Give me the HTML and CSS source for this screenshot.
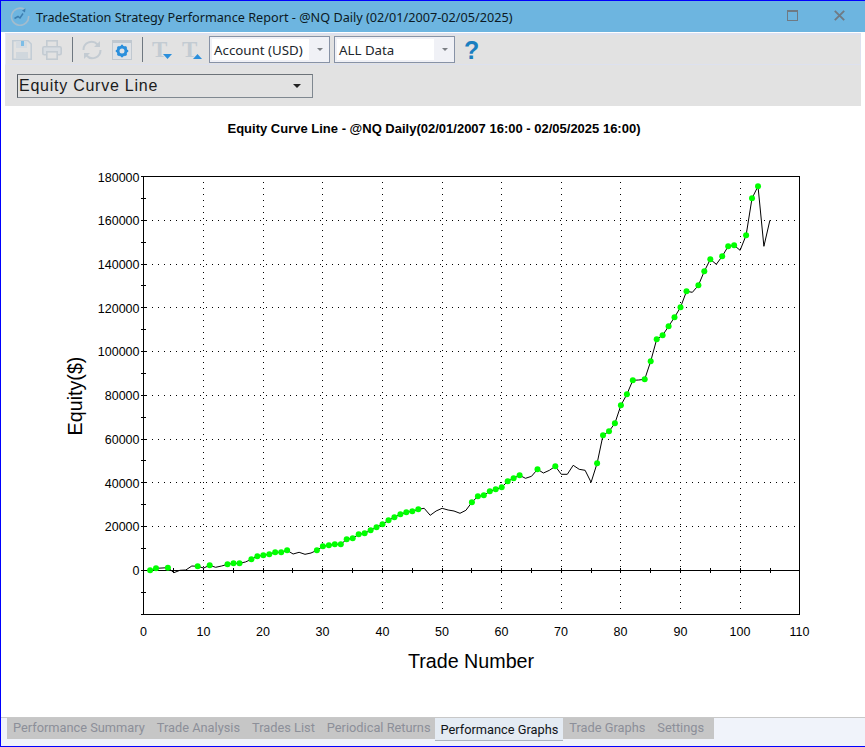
FILE: index.html
```html
<!DOCTYPE html>
<html lang="en">
<head>
<meta charset="utf-8">
<title>TradeStation Strategy Performance Report</title>
<link rel="stylesheet" href="styles.css">
</head>
<body>
<div class="window">
  <header class="titlebar">
    <svg class="app-icon" width="20" height="20" viewBox="0 0 20 20">
      <path d="M14.5 3.4A8.6 8.6 0 1 0 18.6 10" fill="none" stroke="#a3bccd" stroke-width="1.6"/>
      <path d="M4.500 12.500L8 10.500L10 12L13 7.500" fill="none" stroke="#3d7fb0" stroke-width="1.500"/>
      <path d="M12 4.500L15.500 2.500L15 6.500Z" fill="#3d7fb0"/>
    </svg>
    <span class="title-text">TradeStation Strategy Performance Report - @NQ Daily (02/01/2007-02/05/2025)</span>
    <svg class="win-max" width="11" height="11" viewBox="0 0 11 11">
      <rect x="0.500" y="0.500" width="10" height="10" fill="none" stroke="#6f7a84"/>
      <rect x="0" y="0" width="11" height="2" fill="#6f7a84"/>
    </svg>
    <svg class="win-close" width="11" height="11" viewBox="0 0 11 11">
      <path d="M0.800 0.800L10.200 10.200M10.200 0.800L0.800 10.200" stroke="#6f7a84" stroke-width="1.900"/>
    </svg>
  </header>

  <div class="toolbar">
    <svg class="tool" width="20" height="20" viewBox="0 0 20 20">
      <path d="M0.800 0.800H16L19.200 4V19.200H0.800Z" fill="none" stroke="#c3cdd6" stroke-width="1.600"/>
      <rect x="4" y="1" width="11" height="7" fill="#d5dbe1"/>
      <rect x="9" y="1" width="3" height="5" fill="#7dbde6"/>
      <rect x="4" y="12" width="12" height="7" fill="#d0d7dd"/>
    </svg>
    <svg class="tool" width="20" height="20" viewBox="0 0 20 20">
      <rect x="4.800" y="0.800" width="10.400" height="6" fill="none" stroke="#c3cbd2" stroke-width="1.600"/>
      <rect x="0.800" y="6.800" width="18.400" height="8" rx="1.500" fill="#d8dde2" stroke="#c3cbd2" stroke-width="1.600"/>
      <rect x="4.800" y="11.800" width="10.400" height="7.400" fill="#e2e2e2" stroke="#c3cbd2" stroke-width="1.600"/>
    </svg>
    <span class="sep"></span>
    <svg class="tool" width="20" height="20" viewBox="0 0 20 20">
      <path d="M1.500 10A8 8 0 0 1 15.500 4.500" fill="none" stroke="#c3cbd2" stroke-width="2"/>
      <path d="M18.500 10A8 8 0 0 1 4.500 15.500" fill="none" stroke="#c3cbd2" stroke-width="2"/>
      <path d="M18 1V7H12Z" fill="#c3cbd2"/>
      <path d="M2 19V13H8Z" fill="#c3cbd2"/>
    </svg>
    <svg class="tool" width="20" height="20" viewBox="0 0 20 20">
      <rect x="0.500" y="0.500" width="19" height="19" fill="#dfe2e6" stroke="#c0c8d0"/>
      <rect x="0" y="0" width="20" height="3" fill="#c0c8d0"/>
      <circle cx="10" cy="11" r="4" fill="none" stroke="#2a8fdc" stroke-width="3"/>
      <path d="M10 4.800V7M10 15V17.200M3.800 11H6M14 11H16.200M5.600 6.600L7.200 8.200M12.800 13.800L14.400 15.400M14.400 6.600L12.800 8.200M7.200 13.800L5.600 15.400" stroke="#2a8fdc" stroke-width="2"/>
    </svg>
    <span class="sep"></span>
    <div class="tool tool-t">
      <span class="t-glyph">T</span>
      <svg class="t-arrow" width="9" height="5" viewBox="0 0 9 5"><path d="M0 0H9L4.500 5Z" fill="#2a8fdc"/></svg>
    </div>
    <div class="tool tool-t">
      <span class="t-glyph">T</span>
      <svg class="t-arrow" width="9" height="5" viewBox="0 0 9 5"><path d="M0 5H9L4.500 0Z" fill="#2a8fdc"/></svg>
    </div>
    <div class="combo combo-first"><span class="combo-field">Account (USD)</span><span class="combo-arrow"></span></div>
    <div class="combo"><span class="combo-field">ALL Data</span><span class="combo-arrow"></span></div>
    <span class="help">?</span>
  </div>

  <div class="selector-bar">
    <div class="selector"><span class="selector-text">Equity Curve Line</span><span class="selector-arrow"></span></div>
  </div>

  <main class="chart">
    <svg class="plot" width="864" height="611" viewBox="1 106 864 611">
      <text class="chart-title" x="434" y="133" text-anchor="middle">Equity Curve Line - @NQ Daily(02/01/2007 16:00 - 02/05/2025 16:00)</text>

      <g class="grid">
        <path d="M146 220H799M146 264H799M146 307.500H799M146 351H799M146 395H799M146 439H799M146 482.500H799M146 526H799"/>
        <path d="M203.500 182V614M263.500 182V614M322.500 182V614M382.500 182V614M442.500 182V614M501.500 182V614M561.500 182V614M620.500 182V614M680.500 182V614M740.500 182V614"/>
      </g>

      <g class="axes">
        <rect x="143.500" y="176.500" width="656" height="437.500"/>
        <path d="M141 176.500H144M141 614.500H144M141 570.500H800"/>
        <path d="M141 198.500H146M141 220.500H146M141 242.500H146M141 264.500H146M141 285.500H146M141 307.500H146M141 329.500H146M141 351.500H146M141 373.500H146M141 395.500H146M141 417.500H146M141 439.500H146M141 460.500H146M141 482.500H146M141 504.500H146M141 526.500H146M141 548.500H146M141 592.500H146"/>
        <path d="M173.500 568V573M203.500 568V573M233.500 568V573M263.500 568V573M292.500 568V573M322.500 568V573M352.500 568V573M382.500 568V573M412.500 568V573M442.500 568V573M471.500 568V573M501.500 568V573M531.500 568V573M561.500 568V573M591.500 568V573M620.500 568V573M650.500 568V573M680.500 568V573M710.500 568V573M740.500 568V573M770.500 568V573"/>
      </g>

      <g class="ylabels" text-anchor="end">
        <text x="139.500" y="181.500">180000</text>
        <text x="139.500" y="225">160000</text>
        <text x="139.500" y="269">140000</text>
        <text x="139.500" y="312.500">120000</text>
        <text x="139.500" y="356">100000</text>
        <text x="139.500" y="400">80000</text>
        <text x="139.500" y="444">60000</text>
        <text x="139.500" y="487.500">40000</text>
        <text x="139.500" y="531">20000</text>
        <text x="139.500" y="575">0</text>
      </g>
      <g class="xlabels" text-anchor="middle">
        <text x="143.500" y="636">0</text>
        <text x="203.500" y="636">10</text>
        <text x="263" y="636">20</text>
        <text x="322.500" y="636">30</text>
        <text x="382.500" y="636">40</text>
        <text x="442" y="636">50</text>
        <text x="501.500" y="636">60</text>
        <text x="561" y="636">70</text>
        <text x="620.500" y="636">80</text>
        <text x="680.500" y="636">90</text>
        <text x="740" y="636">100</text>
        <text x="799.500" y="636">110</text>
      </g>
      <text class="axis-title" x="471" y="668" text-anchor="middle">Trade Number</text>
      <text class="axis-title" transform="translate(82 396) rotate(-90)" text-anchor="middle">Equity($)</text>

      <g transform="translate(0.600 0)">
        <polyline class="equity" points="149.500,570.300 155.400,568.300 161.400,568 167.300,567.700 173.300,572.700 179.300,570.300 185.200,570 191.200,566 197.100,566.300 203.100,568 209.100,565.300 215,567.300 221,566 226.900,564.300 232.900,563.300 238.900,563.300 244.800,562 250.800,559.300 256.700,556.300 262.700,555.300 268.700,554.300 274.600,552.300 280.600,552.300 286.500,550.300 292.500,554 298.500,552.300 304.400,554.300 310.400,553 316.300,550.300 322.300,546.300 328.300,545.300 334.200,544.300 340.200,544.300 346.100,539.300 352.100,538.300 358.100,534.300 364,533.300 370,530.300 375.900,527.300 381.900,524.300 387.900,520.300 393.800,517.300 399.800,514.300 405.700,512.300 411.700,511.300 417.700,509.300 423.600,508.300 429.600,515.300 435.500,511 441.500,508.300 447.500,510 453.400,511 459.400,513.300 465.300,510.300 471.300,502.300 477.300,496.300 483.200,495.300 489.200,491.300 495.100,489.300 501.100,487.300 507.100,481.300 513,478.300 519,475.300 524.900,478.300 530.900,476.300 536.900,469.300 542.800,473 548.800,470.300 554.700,466.300 560.700,474.300 566.700,474.300 572.600,465.300 578.600,469.300 584.500,470.300 590.500,482.300 596.500,463.300 602.400,435.300 608.400,431.300 614.300,423.300 620.300,405.300 626.300,394.300 632.200,380.300 638.200,380 644.100,379.300 650.100,361.300 656.100,339.300 662,335.300 668,326.300 673.900,317.300 679.900,307.300 685.900,291.300 691.800,292.300 697.800,285.300 703.700,271.300 709.700,259.300 715.700,264.300 721.600,256.300 727.600,246.300 733.500,245.300 739.500,250.300 745.500,235.300 751.400,198.300 757.400,186.300 763.300,246.300 769.300,220.300"/>
        <g class="markers">
          <circle cx="149.500" cy="570.300" r="3"/><circle cx="155.400" cy="568.300" r="3"/><circle cx="167.300" cy="567.700" r="3"/><circle cx="197.100" cy="566.300" r="3"/><circle cx="209.100" cy="565.300" r="3"/><circle cx="226.900" cy="564.300" r="3"/><circle cx="232.900" cy="563.300" r="3"/><circle cx="238.900" cy="563.300" r="3"/><circle cx="250.800" cy="559.300" r="3"/><circle cx="256.700" cy="556.300" r="3"/><circle cx="262.700" cy="555.300" r="3"/><circle cx="268.700" cy="554.300" r="3"/><circle cx="274.600" cy="552.300" r="3"/><circle cx="280.600" cy="552.300" r="3"/><circle cx="286.500" cy="550.300" r="3"/>
          <circle cx="316.300" cy="550.300" r="3"/><circle cx="322.300" cy="546.300" r="3"/><circle cx="328.300" cy="545.300" r="3"/><circle cx="334.200" cy="544.300" r="3"/><circle cx="340.200" cy="544.300" r="3"/><circle cx="346.100" cy="539.300" r="3"/><circle cx="352.100" cy="538.300" r="3"/><circle cx="358.100" cy="534.300" r="3"/><circle cx="364" cy="533.300" r="3"/><circle cx="370" cy="530.300" r="3"/><circle cx="375.900" cy="527.300" r="3"/><circle cx="381.900" cy="524.300" r="3"/><circle cx="387.900" cy="520.300" r="3"/><circle cx="393.800" cy="517.300" r="3"/><circle cx="399.800" cy="514.300" r="3"/><circle cx="405.700" cy="512.300" r="3"/><circle cx="411.700" cy="511.300" r="3"/><circle cx="417.700" cy="509.300" r="3"/>
          <circle cx="471.300" cy="502.300" r="3"/><circle cx="477.300" cy="496.300" r="3"/><circle cx="483.200" cy="495.300" r="3"/><circle cx="489.200" cy="491.300" r="3"/><circle cx="495.100" cy="489.300" r="3"/><circle cx="501.100" cy="487.300" r="3"/><circle cx="507.100" cy="481.300" r="3"/><circle cx="513" cy="478.300" r="3"/><circle cx="519" cy="475.300" r="3"/><circle cx="536.900" cy="469.300" r="3"/><circle cx="554.700" cy="466.300" r="3"/><circle cx="596.500" cy="463.300" r="3"/>
          <circle cx="602.400" cy="435.300" r="3"/><circle cx="608.400" cy="431.300" r="3"/><circle cx="614.300" cy="423.300" r="3"/><circle cx="620.300" cy="405.300" r="3"/><circle cx="626.300" cy="394.300" r="3"/><circle cx="632.200" cy="380.300" r="3"/><circle cx="644.100" cy="379.300" r="3"/><circle cx="650.100" cy="361.300" r="3"/><circle cx="656.100" cy="339.300" r="3"/><circle cx="662" cy="335.300" r="3"/><circle cx="668" cy="326.300" r="3"/><circle cx="673.900" cy="317.300" r="3"/><circle cx="679.900" cy="307.300" r="3"/><circle cx="685.900" cy="291.300" r="3"/><circle cx="697.800" cy="285.300" r="3"/><circle cx="703.700" cy="271.300" r="3"/><circle cx="709.700" cy="259.300" r="3"/><circle cx="721.600" cy="256.300" r="3"/><circle cx="727.600" cy="246.300" r="3"/><circle cx="733.500" cy="245.300" r="3"/><circle cx="745.500" cy="235.300" r="3"/><circle cx="751.400" cy="198.300" r="3"/><circle cx="757.400" cy="186.300" r="3"/>
        </g>
      </g>
    </svg>
  </main>

  <nav class="tabs">
    <div class="tab-strip">
      <span class="tab">Performance Summary</span>
      <span class="tab">Trade Analysis</span>
      <span class="tab">Trades List</span>
      <span class="tab">Periodical Returns</span>
      <span class="tab tab-active">Performance Graphs</span>
      <span class="tab">Trade Graphs</span>
      <span class="tab">Settings</span>
    </div>
  </nav>
</div>
</body>
</html>
```

FILE: styles.css
```css
* { box-sizing: border-box; }
html, body { margin: 0; padding: 0; }
body { background: #ffffff; overflow: hidden; }

.window {
  width: 865px;
  height: 747px;
  display: flex;
  flex-direction: column;
  border: 1px solid #0000ff;
  border-right: 0;
  background: #ffffff;
  font-family: "Noto Sans", "Open Sans", sans-serif;
}

.titlebar {
  height: 31px;
  flex: none;
  background: #6db5e0;
  display: flex;
  align-items: center;
  padding-left: 9px;
}
.app-icon { flex: none; margin-top: -2px; }
.title-text {
  margin-left: 6px;
  font-size: 12.680px;
  color: #0c1a24;
  white-space: nowrap;
  flex: 1;
}
.win-max { flex: none; margin: -2px 0 0 0; }
.win-close { flex: none; margin: -2px 20px 0 36px; }

.toolbar {
  flex: none;
  height: 32px;
  margin: 1px 4px 0 4px;
  background: #e2e2e2;
  border: 1px solid #dde1ef;
  border-top-width: 2px;
  border-left: 1px solid #e6e9f2;
  display: flex;
  align-items: center;
  padding-left: 6px;
}
.tool { flex: none; margin-right: 10px; }
.tool-t {
  width: 20px;
  height: 20px;
  position: relative;
}
.t-glyph {
  display: block;
  font-family: "Liberation Serif", serif;
  font-weight: 700;
  font-size: 23px;
  line-height: 20px;
  color: #c3cbd2;
}
.t-arrow {
  position: absolute;
  right: 0;
  bottom: 1px;
}
.sep {
  flex: none;
  width: 1px;
  height: 25px;
  background: #6e7780;
  margin-right: 9px;
}
.combo {
  flex: none;
  width: 121px;
  height: 27px;
  margin-right: 4px;
  background: #f0f1f6;
  border: 1px solid #8792a6;
  padding: 2px;
  display: flex;
  align-items: stretch;
}
.combo-first { margin-left: -3px; }
.combo-field {
  width: 97px;
  background: #ffffff;
  font-size: 13.300px;
  color: #20262c;
  line-height: 22px;
  padding-left: 2px;
  white-space: nowrap;
}
.combo-arrow {
  width: 0;
  height: 0;
  margin: 9px 0 0 8px;
  border-left: 3px solid transparent;
  border-right: 3px solid transparent;
  border-top: 3px solid #7b7f84;
}
.help {
  flex: none;
  margin-left: 5px;
  font-family: "Liberation Sans", sans-serif;
  font-weight: 700;
  font-size: 25px;
  line-height: 28px;
  color: #1a7fc0;
}

.selector-bar {
  flex: none;
  height: 41px;
  margin: 0 4px;
  background: #e2e2e2;
  padding: 9px 0 0 12px;
}
.selector {
  width: 296px;
  height: 24px;
  border: 1px solid #7f8890;
  border-top-color: #6c7278;
  border-left-color: #555c62;
  display: flex;
  align-items: center;
  justify-content: space-between;
  padding: 0 11px 0 1px;
  font-family: "Liberation Sans", sans-serif;
  font-size: 16px;
  letter-spacing: 0.750px;
  color: #1b1b1b;
}
.selector-arrow {
  width: 0;
  height: 0;
  border-left: 4px solid transparent;
  border-right: 4px solid transparent;
  border-top: 4px solid #222222;
}

.chart { flex: 1; min-height: 0; background: #ffffff; }
.plot { display: block; }
.chart-title {
  font-family: "Liberation Sans", sans-serif;
  font-weight: 700;
  font-size: 13px;
  fill: #000000;
}
.grid path {
  fill: none;
  stroke: #000000;
  stroke-width: 1;
  stroke-dasharray: 1 5;
  shape-rendering: crispEdges;
}
.axes rect, .axes path {
  fill: none;
  stroke: #000000;
  stroke-width: 1;
  shape-rendering: crispEdges;
}
.ylabels text, .xlabels text {
  font-family: "Liberation Sans", sans-serif;
  font-size: 12.500px;
  fill: #000000;
}
.axis-title {
  font-family: "Liberation Sans", sans-serif;
  font-size: 19.700px;
  fill: #000000;
}
.equity {
  fill: none;
  stroke: #000000;
  stroke-width: 1;
}
.markers circle { fill: #00ff00; }

.tabs {
  flex: none;
  height: 29px;
  background: #f0f3fa;
  border-top: 1px solid #c8c8c8;
  padding: 0 0 0 6px;
}
.tab-strip {
  display: flex;
  width: 707px;
  height: 21px;
  background: #c6c6c6;
  padding-left: 6px;
}
.tab {
  font-family: "Roboto", sans-serif;
  font-size: 12.800px;
  line-height: 20px;
  color: #8c8f99;
  margin-right: 12px;
  white-space: nowrap;
}
.tab-active {
  height: 23px;
  line-height: 24px;
  background: #e4ebf3;
  color: #101418;
  border-bottom: 1px solid #aab4be;
  padding: 0 5px 0 6px;
  margin: 0 6px 0 -8px;
}
```
